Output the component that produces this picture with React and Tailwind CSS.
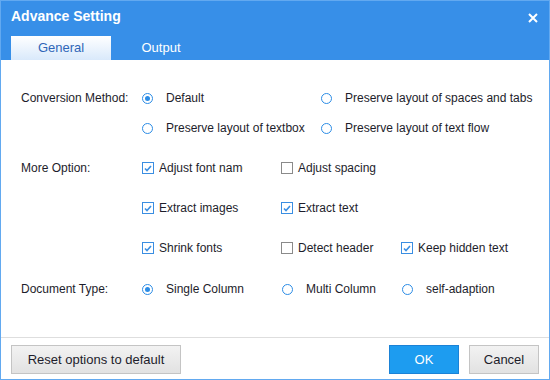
import React, { useState } from "react";

const font = { fontFamily: '"Liberation Sans", Arial, sans-serif' };

function Radio({ checked, onClick }) {
  return (
    <span
      onClick={onClick}
      className="w-[11px] h-[11px] rounded-full border border-[#2b8ce6] bg-white flex items-center justify-center shrink-0 cursor-pointer"
    >
      {checked && <span className="w-[5px] h-[5px] rounded-full bg-[#2b8ce6]" />}
    </span>
  );
}

function Check({ checked, onClick }) {
  return (
    <span
      onClick={onClick}
      className={`w-[12px] h-[12px] border flex items-center justify-center shrink-0 bg-white cursor-pointer ${
        checked ? "border-[#3a8ee2]" : "border-[#8a8a8a]"
      }`}
    >
      {checked && (
        <svg width="8" height="7" viewBox="0 0 8 7">
          <path d="M1 3.5 L3 5.5 L7 1" fill="none" stroke="#3a8ee2" strokeWidth="1.6" />
        </svg>
      )}
    </span>
  );
}

export default function App() {
  const [method, setMethod] = useState("default");
  const [docType, setDocType] = useState("single");
  const [opts, setOpts] = useState({
    fontName: true,
    spacing: false,
    images: true,
    text: true,
    shrink: true,
    header: false,
    hidden: true,
  });
  const toggle = (k) => setOpts((p) => ({ ...p, [k]: !p[k] }));

  const radioItem = (value, label, current, set, w) => (
    <div className={`flex items-center ${w}`}>
      <Radio checked={current === value} onClick={() => set(value)} />
      <span className="ml-[13px] whitespace-nowrap">{label}</span>
    </div>
  );

  const checkItem = (key, label, w, clip) => (
    <div className={`flex items-center ${w}`}>
      <Check checked={opts[key]} onClick={() => toggle(key)} />
      <span className={`ml-[5px] whitespace-nowrap ${clip ? "w-[84px] overflow-hidden" : ""}`}>{label}</span>
    </div>
  );

  return (
    <div
      style={font}
      className="w-[550px] h-[380px] flex flex-col bg-white border border-[#62a9f0] text-[12px] text-[#1d1d2b] overflow-hidden"
    >
      {/* Header */}
      <div className="h-[59px] bg-[#378fe8] flex flex-col shrink-0">
        <div className="flex items-start justify-between pl-[10px] pr-[11px] pt-[5px] h-[30px]">
          <span className="text-white font-bold text-[14px]">Advance Setting</span>
          <svg width="10" height="10" viewBox="0 0 10 10" className="mt-[7px]">
            <path d="M1 1 L9 9 M9 1 L1 9" stroke="white" strokeWidth="2" />
          </svg>
        </div>
        <div className="flex items-end mt-auto pl-[10px]">
          <div className="w-[100px] h-[24px] bg-gradient-to-b from-white to-[#d9e9fb] flex items-center justify-center text-[13px] text-[#2f66b8]">
            General
          </div>
          <div className="w-[100px] h-[24px] flex items-center justify-center text-[13px] text-white">
            Output
          </div>
        </div>
      </div>

      {/* Body */}
      <div className="flex-1 flex flex-col pt-[28px] pl-[20px]">
        <div className="flex items-center h-[20px]">
          <div className="w-[120px]">Conversion Method:</div>
          {radioItem("default", "Default", method, setMethod, "w-[180px] pl-[1px]")}
          {radioItem("spaces", "Preserve layout of spaces and tabs", method, setMethod, "")}
        </div>
        <div className="flex items-center h-[20px] mt-[10px]">
          <div className="w-[120px]" />
          {radioItem("textbox", "Preserve layout of textbox", method, setMethod, "w-[180px] pl-[1px]")}
          {radioItem("flow", "Preserve layout of text flow", method, setMethod, "")}
        </div>

        <div className="flex items-center h-[20px] mt-[20px]">
          <div className="w-[121px]">More Option:</div>
          {checkItem("fontName", "Adjust font name", "w-[139px]", true)}
          {checkItem("spacing", "Adjust spacing", "w-[120px]")}
        </div>
        <div className="flex items-center h-[20px] mt-[20px]">
          <div className="w-[121px]" />
          {checkItem("images", "Extract images", "w-[139px]")}
          {checkItem("text", "Extract text", "w-[120px]")}
        </div>
        <div className="flex items-center h-[20px] mt-[20px]">
          <div className="w-[121px]" />
          {checkItem("shrink", "Shrink fonts", "w-[139px]")}
          {checkItem("header", "Detect header", "w-[120px]")}
          {checkItem("hidden", "Keep hidden text", "")}
        </div>

        <div className="flex items-center h-[20px] mt-[21px]">
          <div className="w-[120px]">Document Type:</div>
          {radioItem("single", "Single Column", docType, setDocType, "w-[140px] pl-[1px]")}
          {radioItem("multi", "Multi Column", docType, setDocType, "w-[120px] pl-[1px]")}
          {radioItem("self", "self-adaption", docType, setDocType, "pl-[1px]")}
        </div>
      </div>

      {/* Footer */}
      <div className="h-[42px] border-t border-[#dedede] flex items-start pt-[7px] px-[10px] shrink-0">
        <button className="w-[170px] h-[29px] border border-[#c4c4c4] bg-gradient-to-b from-[#f2f2f2] to-[#e2e2e2] text-[13px] text-[#1d1d2b]">
          Reset options to default
        </button>
        <div className="ml-auto flex gap-[10px]">
          <button className="w-[70px] h-[29px] border border-[#1b82d6] bg-[#1d9cf0] text-white text-[13px]">
            OK
          </button>
          <button className="w-[70px] h-[29px] border border-[#c4c4c4] bg-gradient-to-b from-[#f2f2f2] to-[#e2e2e2] text-[13px] text-[#1d1d2b]">
            Cancel
          </button>
        </div>
      </div>
    </div>
  );
}
